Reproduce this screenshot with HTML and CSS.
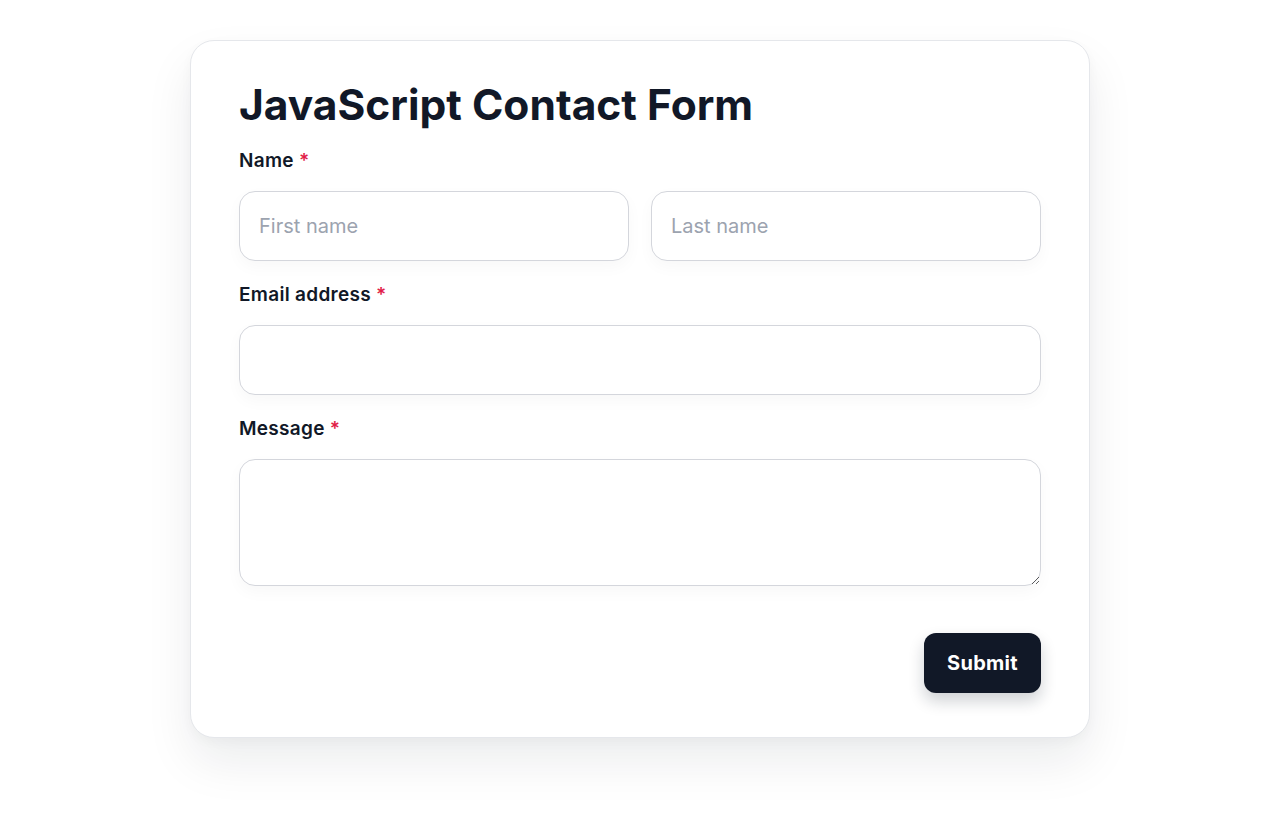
FILE: index.html
```html
<!DOCTYPE html>
<html lang="en">
<head>
<meta charset="utf-8">
<title>JavaScript Contact Form</title>
<link rel="stylesheet" href="styles.css">
</head>
<body>
<main class="page">
  <form class="card">
    <h1 class="title">JavaScript Contact Form</h1>
    <div class="field">
      <label class="label">Name <span class="req">*</span></label>
      <div class="row">
        <input class="input" type="text" placeholder="First name">
        <input class="input" type="text" placeholder="Last name">
      </div>
    </div>
    <div class="field">
      <label class="label">Email address <span class="req">*</span></label>
      <input class="input" type="email">
    </div>
    <div class="field">
      <label class="label">Message <span class="req">*</span></label>
      <textarea class="input textarea"></textarea>
    </div>
    <div class="actions">
      <button class="submit" type="button">Submit</button>
    </div>
  </form>
</main>
</body>
</html>
```

FILE: styles.css
```css
* { box-sizing: border-box; }
html, body { margin: 0; padding: 0; background: #ffffff; min-height: 820px; }
body { font-family: Inter, "Noto Sans", sans-serif; color: #111827; }
.page { display: flex; justify-content: center; align-items: flex-start; padding: 40px 0 80px; }
.card {
  width: 900px;
  background: #fff;
  border: 1px solid #e5e7eb;
  border-radius: 24px;
  padding: 36px 48px 44px;
  box-shadow: 0 24px 48px rgba(17, 24, 39, 0.08), 0 4px 12px rgba(17,24,39,0.03);
}
.title {
  margin: 0 0 14px;
  font-size: 42.5px;
  line-height: 56px;
  font-weight: 700;
  letter-spacing: 0;
  color: #111827;
}
.field { display: flex; flex-direction: column; margin-bottom: 20px; }
.label { font-size: 19px; line-height: 28px; font-weight: 600; margin-bottom: 16px; color: #111827; letter-spacing: 0.3px; }
.req { color: #e11d48; }
.row { display: flex; gap: 22px; }
.row .input { flex: 1; min-width: 0; }
.input {
  display: block;
  width: 100%;
  height: 70px;
  border: 1.5px solid #d4d6dc;
  border-radius: 16px;
  padding: 0 19px;
  font-family: inherit;
  font-size: 20px;
  color: #111827;
  background: #fff;
  box-shadow: 0 6px 16px rgba(17,24,39,0.03);
  outline: none;
}
.input::placeholder { color: #9ca3af; }
.textarea { height: 127px; padding: 16px 19px; resize: vertical; }
.actions { display: flex; justify-content: flex-end; margin-top: 47px; }
.submit {
  width: 117px;
  height: 60px;
  border: 0;
  border-radius: 12px;
  background: #111827;
  color: #fff;
  font-family: inherit;
  font-size: 20px;
  font-weight: 700;
  letter-spacing: 0.3px;
  box-shadow: 0 8px 16px rgba(17,24,39,0.2);
}
```
